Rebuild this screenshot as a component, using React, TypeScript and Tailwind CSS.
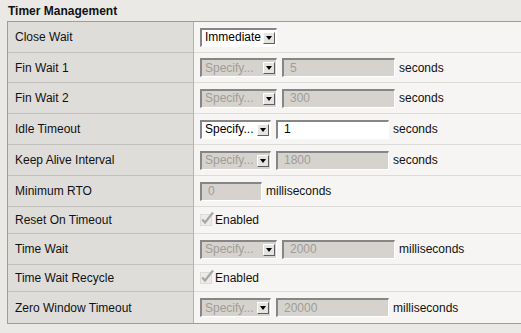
import React from "react";

type Row = {
  label: string;
  h: string;
  kind: "select" | "input" | "check";
  option?: string;
  selectW?: string;
  value?: string;
  inputW?: string;
  unit?: string;
  disabled?: boolean;
};

const rows: Row[] = [
  { label: "Close Wait", h: "h-[31px]", kind: "select", option: "Immediate", selectW: "w-[77px]" },
  { label: "Fin Wait 1", h: "h-[30px]", kind: "select", option: "Specify...", selectW: "w-[77px]", value: "5", inputW: "w-[113px]", unit: "seconds", disabled: true },
  { label: "Fin Wait 2", h: "h-[31px]", kind: "select", option: "Specify...", selectW: "w-[77px]", value: "300", inputW: "w-[113px]", unit: "seconds", disabled: true },
  { label: "Idle Timeout", h: "h-[31px]", kind: "select", option: "Specify...", selectW: "w-[71px]", value: "1", inputW: "w-[113px]", unit: "seconds" },
  { label: "Keep Alive Interval", h: "h-[31px]", kind: "select", option: "Specify...", selectW: "w-[71px]", value: "1800", inputW: "w-[113px]", unit: "seconds", disabled: true },
  { label: "Minimum RTO", h: "h-[31px]", kind: "input", value: "0", inputW: "w-[62px]", unit: "milliseconds", disabled: true },
  { label: "Reset On Timeout", h: "h-[27px]", kind: "check" },
  { label: "Time Wait", h: "h-[31px]", kind: "select", option: "Specify...", selectW: "w-[77px]", value: "2000", inputW: "w-[113px]", unit: "milliseconds", disabled: true },
  { label: "Time Wait Recycle", h: "h-[27px]", kind: "check" },
  { label: "Zero Window Timeout", h: "h-[31px]", kind: "select", option: "Specify...", selectW: "w-[71px]", value: "20000", inputW: "w-[113px]", unit: "milliseconds", disabled: true },
];

function Select({ option, w, disabled }: { option: string; w: string; disabled?: boolean }) {
  return (
    <div
      className={`flex items-center h-[19px] shrink-0 border-t-2 border-l-2 border-t-[#868686] border-l-[#868686] border-r border-b border-r-white border-b-white ${w} ${
        disabled ? "bg-[#d6d3ce] text-[#a09d98]" : "bg-white text-black"
      }`}
    >
      <span className="pl-[3px] leading-[15px]">{option}</span>
      <span className="ml-auto mr-[1px] w-[12px] h-[12px] flex items-center justify-center bg-[#e6e4e0] border border-t-white border-l-white border-r-[#5e5e5e] border-b-[#5e5e5e]">
        <span className="w-0 h-0 border-l-[3px] border-r-[3px] border-t-[4px] border-l-transparent border-r-transparent border-t-black" />
      </span>
    </div>
  );
}

function Input({ value, w, disabled }: { value: string; w: string; disabled?: boolean }) {
  return (
    <div
      className={`flex items-center h-[19px] shrink-0 border-t-2 border-l-2 border-t-[#868686] border-l-[#868686] border-r border-b border-r-white border-b-white pl-[6px] ${w} ${
        disabled ? "bg-[#d6d3ce] text-[#a09d98]" : "bg-white text-black"
      }`}
    >
      <span className="leading-[15px]">{value}</span>
    </div>
  );
}

function Check() {
  return (
    <div className="flex items-center">
      <svg width="15" height="15" viewBox="0 0 15 15" className="-mt-[4px]">
        <rect x="0.5" y="3.5" width="11" height="11" fill="#ecebe8" stroke="#dddbd7" />
        <path d="M2.2 8.5 L5 11.5 L13 1.5" stroke="#a7a7a7" strokeWidth="2.2" fill="none" />
      </svg>
      <span className="ml-[0px]">Enabled</span>
    </div>
  );
}

export default function App() {
  return (
    <div className="min-h-screen bg-[#eae9e5] text-[12px] text-[#111] font-['Liberation_Sans',Arial,sans-serif] overflow-hidden">
      <div className="h-[21px] pt-[4px] pl-[8px] font-bold leading-[14px]">Timer Management</div>
      <div className="ml-[7px] border-t border-b border-l border-[#9d9d9d] bg-[#f6f5f3]">
        {rows.map((r, i) => (
          <div
            key={r.label}
            className={`flex ${r.h} ${i < rows.length - 1 ? "border-b border-[#dcdbd8]" : ""}`}
          >
            <div
              className={`w-[186px] shrink-0 flex items-center pl-[7px] bg-[#dfddda] border-r border-r-[#b3b2af] ${
                i < rows.length - 1 ? "-mb-px border-b border-b-[#c2c0bc]" : ""
              }`}
            >
              {r.label}
            </div>
            <div className="flex items-center pl-[6px] gap-[5px]">
              {r.kind === "select" && (
                <Select option={r.option!} w={r.selectW!} disabled={r.disabled} />
              )}
              {r.value && <Input value={r.value} w={r.inputW!} disabled={r.disabled} />}
              {r.unit && <span className="-ml-[1px]">{r.unit}</span>}
              {r.kind === "check" && <Check />}
            </div>
          </div>
        ))}
      </div>
    </div>
  );
}
